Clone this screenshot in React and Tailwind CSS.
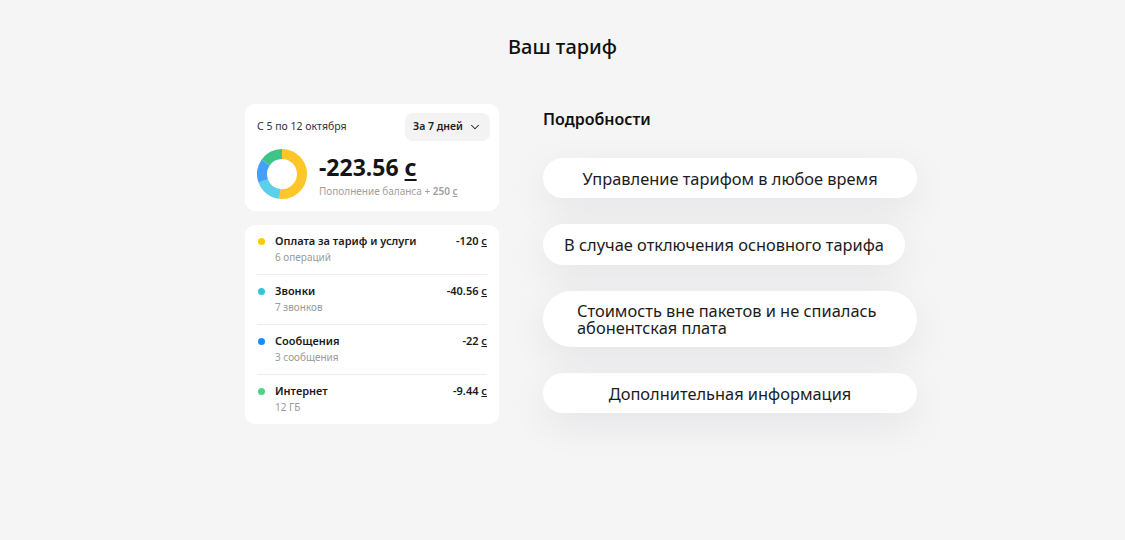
import React from 'react';
import { ChevronDown } from 'lucide-react';

const rows = [
  { dot: 'bg-[#ffc800]', title: 'Оплата за тариф и услуги', sub: '6 операций', sum: '-120' },
  { dot: 'bg-[#35c3d9]', title: 'Звонки', sub: '7 звонков', sum: '-40.56' },
  { dot: 'bg-[#1b8cf5]', title: 'Сообщения', sub: '3 сообщения', sum: '-22' },
  { dot: 'bg-[#4cd48c]', title: 'Интернет', sub: '12 ГБ', sum: '-9.44' },
];

const arc = (r, a0, a1) => {
  const rad = (a) => ((a - 90) * Math.PI) / 180;
  const x0 = 25 + r * Math.cos(rad(a0));
  const y0 = 25 + r * Math.sin(rad(a0));
  const x1 = 25 + r * Math.cos(rad(a1));
  const y1 = 25 + r * Math.sin(rad(a1));
  const large = a1 - a0 > 180 ? 1 : 0;
  return `M${x0} ${y0} A${r} ${r} 0 ${large} 1 ${x1} ${y1}`;
};

const Donut = () => (
  <svg width="50" height="50" viewBox="0 0 50 50">
    <path d={arc(20, 0, 186)} stroke="#ffc629" strokeWidth="10" fill="none" />
    <path d={arc(20, 186, 250)} stroke="#5ccfe9" strokeWidth="10" fill="none" />
    <path d={arc(20, 250, 305)} stroke="#44a0fb" strokeWidth="10" fill="none" />
    <path d={arc(20, 305, 360)} stroke="#3ec487" strokeWidth="10" fill="none" />
  </svg>
);

const Pill = ({ className = '', children }) => (
  <div
    className={`flex items-center rounded-full bg-white shadow-[0_12px_40px_rgba(20,20,60,0.07)] text-[16.4px] leading-[17px] text-[#1c1c1c] ${className}`}
  >
    {children}
  </div>
);

export default function App() {
  return (
    <div
      className="min-h-[540px] bg-[#f5f5f5] text-[#1a1a1a]"
      style={{ fontFamily: '"Noto Sans", "Open Sans", sans-serif' }}
    >
      <h1 className="pt-[33px] text-center text-[20px] leading-[28px] font-medium text-[#111]">Ваш тариф</h1>

      <div className="mt-[43px] flex items-start gap-[45px] pl-[245px]">
        <div className="flex w-[254px] flex-col gap-[14px]">
          <div className="rounded-[10px] bg-white pt-[9px] pr-[9px] pb-[12px] pl-[12px]">
            <div className="flex items-center justify-between">
              <span className="text-[10.5px] text-[#333]">С 5 по 12 октября</span>
              <button className="flex h-[28px] w-[85px] items-center justify-center gap-[5px] rounded-lg bg-[#f3f3f3] text-[10.5px] font-semibold text-[#222]">
                За 7 дней
                <ChevronDown size={14} strokeWidth={1.8} />
              </button>
            </div>
            <div className="mt-[8px] flex items-center gap-[12px]">
              <Donut />
              <div className="pt-[3px]">
                <div className="text-[23px] leading-[30px] font-bold text-[#151515]">
                  -223.56 <span className="underline decoration-[2px] underline-offset-[3px]">с</span>
                </div>
                <div className="mt-[2px] text-[10px] text-[#a0a0a0]">
                  Пополнение баланса + <span className="font-semibold">250 <span className="underline">с</span></span>
                </div>
              </div>
            </div>
          </div>

          <div className="rounded-[10px] bg-white px-[12px]">
            {rows.map((r, i) => (
              <div
                key={r.title}
                className={`flex items-start pt-[8px] pb-[9px] ${i < rows.length - 1 ? 'border-b border-[#ececec]' : ''}`}
              >
                <span className={`mt-[5px] ml-[1px] h-[7px] w-[7px] shrink-0 rounded-full ${r.dot}`} />
                <div className="ml-[10px] flex-1">
                  <div className="text-[11px] leading-[16px] font-semibold text-[#1a1a1a]">{r.title}</div>
                  <div className="text-[10px] leading-[16px] text-[#9a9a9a]">{r.sub}</div>
                </div>
                <div className="text-[11px] leading-[16px] font-semibold text-[#1a1a1a]">
                  {r.sum} <span className="underline">с</span>
                </div>
              </div>
            ))}
          </div>
        </div>

        <div className="-ml-px flex w-[374px] flex-col">
          <h2 className="mt-[4px] text-[16px] leading-[22px] font-semibold text-[#111]">Подробности</h2>
          <div className="mt-[28px] flex flex-col items-start gap-[26px]">
            <Pill className="h-[40px] w-[374px] justify-center">Управление тарифом в любое время</Pill>
            <Pill className="h-[41px] w-[362px] justify-center">В случае отключения основного тарифа</Pill>
            <Pill className="h-[56px] w-[374px] px-[34px]">
              <span>Стоимость вне пакетов и не спиалась<br />абонентская плата</span>
            </Pill>
            <Pill className="h-[40px] w-[374px] justify-center">Дополнительная информация</Pill>
          </div>
        </div>
      </div>
    </div>
  );
}
